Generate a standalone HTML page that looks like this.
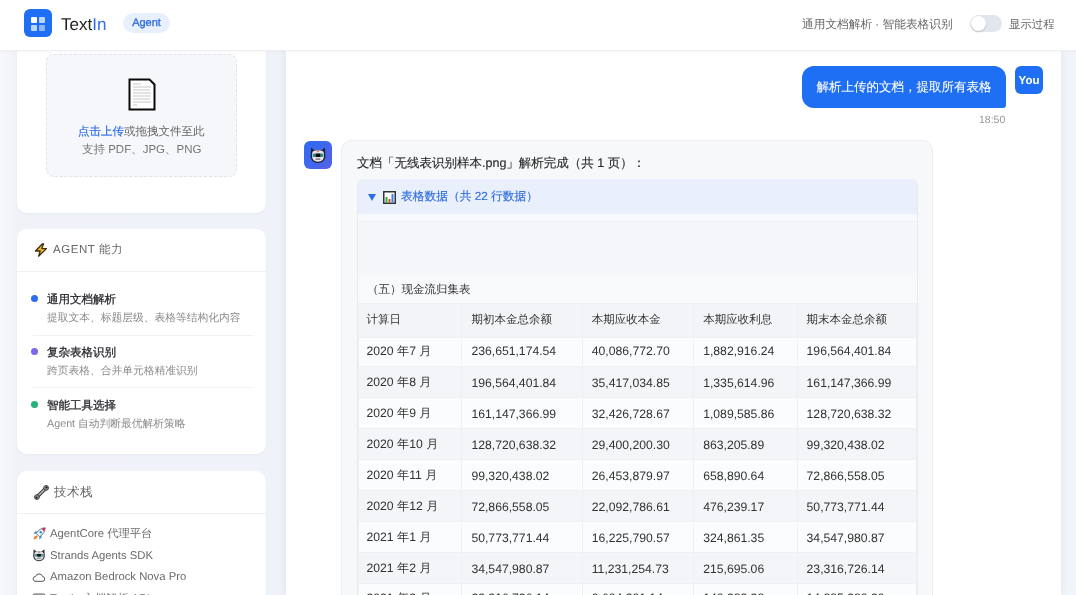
<!DOCTYPE html>
<html><head><meta charset="utf-8">
<style>
*{box-sizing:border-box;margin:0;padding:0}
html,body{width:1076px;height:595px;overflow:hidden}
#wrap{position:absolute;left:0;top:0;width:1076px;height:595px;will-change:transform}
body{font-family:"Liberation Sans",sans-serif;text-rendering:geometricPrecision;background:#f1f4fa;position:relative;color:#333}
.abs{position:absolute}
/* header */
#hdr{position:absolute;left:0;top:0;width:1076px;height:51px;background:#fff;border-bottom:1px solid #efeff1;box-shadow:0 1px 3px rgba(0,0,0,0.03);z-index:5}
#logo{left:24px;top:9px;width:28px;height:28px;border-radius:6px;background:#1e6ff4}
#logo i{position:absolute;width:6px;height:6px;border-radius:1px;background:#fff}
#brand{left:61px;top:15px;font-size:17px;color:#222;line-height:20px}
#brand span{color:#2c6fe6}
#badge{left:123px;top:13px;width:47px;height:20px;border-radius:10px;background:#e9f0fd;color:#2f6fe0;font-size:11px;line-height:20px;text-align:center;-webkit-text-stroke:.35px #2f6fe0}
#modes{left:802px;top:16px;font-size:11.7px;color:#666;line-height:18px}
#tog{left:969.5px;top:14.5px;width:32.5px;height:17px;border-radius:9px;background:#e4e6ed}
#tog i{position:absolute;left:1px;top:1px;width:15px;height:15px;border-radius:50%;background:#fff;box-shadow:0 1px 2px rgba(0,0,0,.2)}
#show{left:1009px;top:16px;font-size:11.4px;color:#666;line-height:18px}
/* sidebar */
#side{left:0;top:0;width:286px;height:595px;background:linear-gradient(90deg,#f8f8fb 0,#f0f2f8 16px,#eff2f9 100%);overflow:hidden}
#sidebar-edge{left:281px;top:49px;width:5px;height:546px;background:#ebedf2}
.card{position:absolute;left:17px;width:249px;background:#fff;border-radius:10px;box-shadow:0 1px 3px rgba(30,40,80,.04)}
#c1{top:-10px;height:223px}
#drop{left:30px;top:64px;width:191px;height:123px;border:1px dashed #e1e4ea;border-radius:8px;background:#f6f7fa}
#c2{top:229px;height:225px}
#c3{top:471px;height:200px}
.ch{position:absolute;left:0;top:0;width:250px;height:43px;border-bottom:1px solid #eef0f4}
.ct{position:absolute;left:37px;top:13px;font-size:11.5px;color:#666;line-height:16px;letter-spacing:.55px}
.item{position:absolute;left:0;width:250px}
.dot{position:absolute;left:15px;width:7px;height:7px;border-radius:50%;margin-top:-1px}
.it{position:absolute;left:31px;font-size:11.5px;color:#2a2a30;line-height:16px;-webkit-text-stroke:.3px #2a2a30}
.is{position:absolute;left:31px;font-size:10.75px;color:#8a8a8a;line-height:14px;white-space:nowrap}
.sep{position:absolute;left:17px;width:220px;height:1px;background:#f0f1f4}
.ts{position:absolute;left:34px;font-size:11.3px;color:#6a6a6a;line-height:14px;white-space:nowrap}
/* chat */
#chat{left:286px;top:0;width:775px;height:595px;background:#fff;box-shadow:0 0 8px rgba(30,40,70,.08)}
#ubub{left:802px;top:66px;width:204px;height:42px;background:#1f6ff4;border-radius:12px 12px 3px 12px;color:#fff;font-size:12.5px;line-height:42px;text-align:center;-webkit-text-stroke:.1px #fff}
#uav{left:1015px;top:66px;width:28px;height:28px;border-radius:6px;background:#1f6ff4;color:#fff;font-size:11.5px;font-weight:bold;text-align:center;line-height:30px}
#time{left:979px;top:112.5px;font-size:10.5px;color:#999;line-height:14px}
#bav{left:304px;top:140.5px;width:28px;height:28px;border-radius:6px;background:linear-gradient(135deg,#2d6cf2,#5561e8)}
#bbub{left:341px;top:140px;width:592px;height:500px;background:#f7f8fa;border:1px solid #eceef2;border-radius:10px}
#btxt{left:357px;top:154px;font-size:12.5px;color:#2a2a2a;-webkit-text-stroke:.15px #2a2a2a;line-height:18px;white-space:nowrap}
#tbl{left:357px;top:179px;width:561px;height:450px;border-radius:6px;background:#f4f6f9;overflow:hidden;border-right:1px solid #e8eaef;border-left:1px solid #e8eaef}
#sum{position:absolute;left:-1px;top:0;width:563px;height:35px;background:#e9f0fc}
#band{position:absolute;left:0;top:35px;width:561px;height:8px;background:#f7f9fc;border-bottom:1px solid #eef0f4}
#tri{left:10px;top:14.5px;width:0;height:0;border-left:4px solid transparent;border-right:4px solid transparent;border-top:7.5px solid #2b6cf0}
#sumt{left:43px;top:10px;font-size:11.75px;color:#2f6be0;line-height:16px;-webkit-text-stroke:.15px #2f6be0;white-space:nowrap}
#cap{position:absolute;left:0;top:94px;width:561px;height:30px;background:#f8f9fb}
#capt{left:9px;top:102.5px;font-size:11.5px;color:#333;line-height:16px}
table{position:absolute;left:0;top:124px;border-collapse:collapse;font-size:12.2px;color:#333}
td,th{font-weight:normal;text-align:left;padding:0 0 0 9px;height:30.8px;white-space:nowrap;border:1px solid #eef0f4}
th{height:33.5px;background:#f3f4f8;font-size:11.5px}
td{padding-bottom:0;padding-top:1px;height:31px}
tr.r1 td{height:29.5px;padding-top:0;padding-bottom:1px}
td:first-child,th:first-child{padding-left:7.5px}
tr.r9 td{padding-top:0;padding-bottom:2px}
tr.o td{background:#fbfcfd}
tr.e td{background:#f4f5f8}
.card>*{margin-left:-1px}
.card>.ch{margin-left:0;width:249px}
</style></head><body><div id="wrap">
<div id="side" class="abs">
  <div class="card" id="c1">
    <div id="drop" class="abs"></div>
    <svg class="abs" style="left:112px;top:88px" width="28" height="33" viewBox="0 0 28 33"><path d="M1.5 1.5H21.5L26.5 6.5V31.5H1.5Z" fill="#fff" stroke="#0a0a0a" stroke-width="2" stroke-linejoin="miter"/><g stroke="#bcbcbc" stroke-width=".85"><path d="M5 6H13M5 9H23M5 12H22M5 15H23M5 18H23M5 21H22M5 24H23M5 27H9"/></g></svg>
    <div class="abs" style="left:62px;top:133.5px;font-size:11.5px;line-height:16px;color:#666;white-space:nowrap"><span style="color:#2b6be6;-webkit-text-stroke:.15px #2b6be6">点击上传</span>或拖拽文件至此</div>
    <div class="abs" style="left:66px;top:151.5px;font-size:11.5px;line-height:16px;color:#777;white-space:nowrap">支持 PDF、JPG、PNG</div>
  </div>
  <div class="card" id="c2">
    <div class="ch"></div>
    <svg class="abs" style="left:18px;top:14px" width="14" height="14" viewBox="0 0 14 14"><path d="M8.5 0.8L1.5 8H6.2L4.6 13.2L12.5 5.6H7.8L9.6 0.8Z" fill="#f5bd2a" stroke="#3a2e10" stroke-width="1.3" stroke-linejoin="round"/></svg>
    <div class="ct">AGENT 能力</div>
    <div class="item" style="top:64px"><div class="dot" style="background:#2a6cf2;top:3px"></div><div class="it" style="top:-1px">通用文档解析</div><div class="is" style="top:18px">提取文本、标题层级、表格等结构化内容</div></div>
    <div class="sep" style="top:106px"></div>
    <div class="item" style="top:117px"><div class="dot" style="background:#7a68ee;top:3px"></div><div class="it" style="top:-1px">复杂表格识别</div><div class="is" style="top:18px">跨页表格、合并单元格精准识别</div></div>
    <div class="sep" style="top:158px"></div>
    <div class="item" style="top:170px"><div class="dot" style="background:#22b27a;top:3px"></div><div class="it" style="top:-1px">智能工具选择</div><div class="is" style="top:18px">Agent 自动判断最优解析策略</div></div>
  </div>
  <div class="card" id="c3">
    <div class="ch"></div>
    <svg class="abs" style="left:17.5px;top:13.5px" width="15" height="15" viewBox="0 0 15 15"><path d="M3.2 11.8L11.8 3.2" stroke="#3a3a3a" stroke-width="3.6" stroke-linecap="round"/><path d="M3.2 11.8L11.8 3.2" stroke="#b8b8b8" stroke-width="1.6" stroke-linecap="round"/><circle cx="2.9" cy="12.1" r="2.4" fill="#9a9a9a" stroke="#333" stroke-width=".9"/><circle cx="12.1" cy="2.9" r="2.4" fill="#9a9a9a" stroke="#333" stroke-width=".9"/><circle cx="2.5" cy="12.5" r="1" fill="#111"/><circle cx="12.5" cy="2.5" r="1" fill="#111"/></svg>
    <div class="ct" style="left:38px;font-size:12.5px">技术栈</div>
    <svg class="abs" style="left:16px;top:56px" width="14" height="14" viewBox="0 0 14 14"><path d="M13.2 0.8C9.5 0.9 6.3 3 4.2 6.4L7.6 9.8C11 7.7 13.1 4.5 13.2 0.8Z" fill="#f2f4f8" stroke="#2a4a7a" stroke-width=".7"/><path d="M13.2 0.8C11.8 0.9 10.5 1.3 9.5 1.9L12.1 4.5C12.7 3.5 13.1 2.2 13.2 0.8Z" fill="#d8344a"/><circle cx="8.8" cy="5.2" r="1.2" fill="#2e8fd8"/><path d="M4.2 6.4L1.6 6.9L3.2 4.6L5.6 4.4ZM7.6 9.8L7.1 12.4L9.4 10.8L9.6 8.4Z" fill="#3a7fc8"/><path d="M4.6 8.2L2.2 9.8L1.4 12.6L4.2 11.8L5.8 9.4Z" fill="#e8862a"/></svg>
    <div class="ts" style="top:56px">AgentCore 代理平台</div>
    <svg class="abs" style="left:15.5px;top:77px" width="14" height="14" viewBox="0 0 17 17"><path d="M2 1.5L5 4H12L15 1.5L15.5 9.5C15.5 13.5 12.5 16 8.5 16C4.5 16 1.5 13.5 1.5 9.5Z" fill="#2a2f3a"/><path d="M3 6.5C3 4.8 5 4 8.5 4C12 4 14 4.8 14 6.5V10C14 13 12 14.8 8.5 14.8C5 14.8 3 13 3 10Z" fill="#dcdde2"/><path d="M7.5 4.2H9.5L9 6H8Z" fill="#e8633a"/><rect x="3.6" y="7.2" width="9.8" height="3.2" rx="1.2" fill="#4a8f8a"/><rect x="6.4" y="7.2" width="4.2" height="3.2" fill="#080808"/><rect x="6.2" y="11.6" width="4.6" height="1.6" rx=".6" fill="#8a8a90"/></svg>
    <div class="ts" style="top:78px">Strands Agents SDK</div>
    <svg class="abs" style="left:16px;top:102px" width="13" height="9" viewBox="0 0 13 9"><path d="M3 8.3H10.2A2.4 2.4 0 0 0 10.5 3.5A3.6 3.6 0 0 0 3.6 3.4A2.5 2.5 0 0 0 3 8.3Z" fill="none" stroke="#555" stroke-width="1"/></svg>
    <div class="ts" style="top:99px">Amazon Bedrock Nova Pro</div>
    <svg class="abs" style="left:16px;top:122px" width="14" height="12" viewBox="0 0 14 12"><rect x="1" y="1" width="12" height="10" rx="1.5" fill="#ddd" stroke="#555"/></svg>
    <div class="ts" style="top:121px">TextIn 文档解析 API</div>
  </div>
</div>
<div id="chat" class="abs"></div>
<div id="ubub" class="abs">解析上传的文档，提取所有表格</div>
<div id="uav" class="abs">You</div>
<div id="time" class="abs">18:50</div>
<div id="bav" class="abs"><svg class="abs" style="left:5px;top:5.5px" width="18" height="18" viewBox="0 0 17 17"><path d="M2 1.5L5 4H12L15 1.5L15.5 9.5C15.5 13.5 12.5 16 8.5 16C4.5 16 1.5 13.5 1.5 9.5Z" fill="#1d2333"/><path d="M3 6.5C3 4.8 5 4 8.5 4C12 4 14 4.8 14 6.5V10C14 13 12 14.8 8.5 14.8C5 14.8 3 13 3 10Z" fill="#e6e6ea"/><path d="M7.5 4.2H9.5L9 6H8Z" fill="#e8633a"/><rect x="3.6" y="7.2" width="9.8" height="3.2" rx="1.2" fill="#2f8f86"/><rect x="6.4" y="7.2" width="4.2" height="3.2" fill="#080808"/><rect x="6.2" y="11.6" width="4.6" height="1.6" rx=".6" fill="#8a8a90"/></svg></div>
<div id="bbub" class="abs"></div>
<div id="btxt" class="abs">文档「无线表识别样本.png」解析完成（共 1 页）：</div>
<div id="tbl" class="abs">
  <div id="sum"></div><div id="band"></div>
  <div id="tri" class="abs"></div>
  <svg class="abs" style="left:24.5px;top:11.5px" width="13" height="13" viewBox="0 0 13 13"><rect x=".75" y=".75" width="11.5" height="11.5" fill="#fff" stroke="#333" stroke-width="1.5"/><rect x="2.5" y="6" width="2" height="5.5" fill="#2eae4f"/><rect x="5.5" y="8" width="2" height="3.5" fill="#e0442c"/><rect x="8.5" y="3" width="2" height="8.5" fill="#3a7ee6"/></svg>
  <div id="sumt" class="abs">表格数据（共 22 行数据）</div>
  <div id="cap"></div>
  <div id="capt" class="abs">（五）现金流归集表</div>
  <table>
<tr><th style="width:104px">计算日</th><th style="width:121px">期初本金总余额</th><th style="width:112px">本期应收本金</th><th style="width:104px">本期应收利息</th><th style="width:120px">期末本金总余额</th></tr>
<tr class="o r1"><td>2020 年7 月</td><td>236,651,174.54</td><td>40,086,772.70</td><td>1,882,916.24</td><td>196,564,401.84</td></tr>
<tr class="e"><td>2020 年8 月</td><td>196,564,401.84</td><td>35,417,034.85</td><td>1,335,614.96</td><td>161,147,366.99</td></tr>
<tr class="o"><td>2020 年9 月</td><td>161,147,366.99</td><td>32,426,728.67</td><td>1,089,585.86</td><td>128,720,638.32</td></tr>
<tr class="e"><td>2020 年10 月</td><td>128,720,638.32</td><td>29,400,200.30</td><td>863,205.89</td><td>99,320,438.02</td></tr>
<tr class="o"><td>2020 年11 月</td><td>99,320,438.02</td><td>26,453,879.97</td><td>658,890.64</td><td>72,866,558.05</td></tr>
<tr class="e"><td>2020 年12 月</td><td>72,866,558.05</td><td>22,092,786.61</td><td>476,239.17</td><td>50,773,771.44</td></tr>
<tr class="o"><td>2021 年1 月</td><td>50,773,771.44</td><td>16,225,790.57</td><td>324,861.35</td><td>34,547,980.87</td></tr>
<tr class="e"><td>2021 年2 月</td><td>34,547,980.87</td><td>11,231,254.73</td><td>215,695.06</td><td>23,316,726.14</td></tr>
<tr class="o r9"><td>2021 年3 月</td><td>23,316,726.14</td><td>9,604,391.14</td><td>140,283.38</td><td>14,885,380.39</td></tr>
  </table>
</div>
<div id="hdr">
  <div id="logo" class="abs"><i style="left:7px;top:7.5px"></i><i style="left:15px;top:7.5px;opacity:.7"></i><i style="left:7px;top:15.5px;opacity:.7"></i><i style="left:15px;top:15.5px;opacity:.5"></i></div>
  <div id="brand" class="abs">Text<span>In</span></div>
  <div id="badge" class="abs">Agent</div>
  <div id="modes" class="abs">通用文档解析 · 智能表格识别</div>
  <div id="tog" class="abs"><i></i></div>
  <div id="show" class="abs">显示过程</div>
</div>
</div></body></html>
